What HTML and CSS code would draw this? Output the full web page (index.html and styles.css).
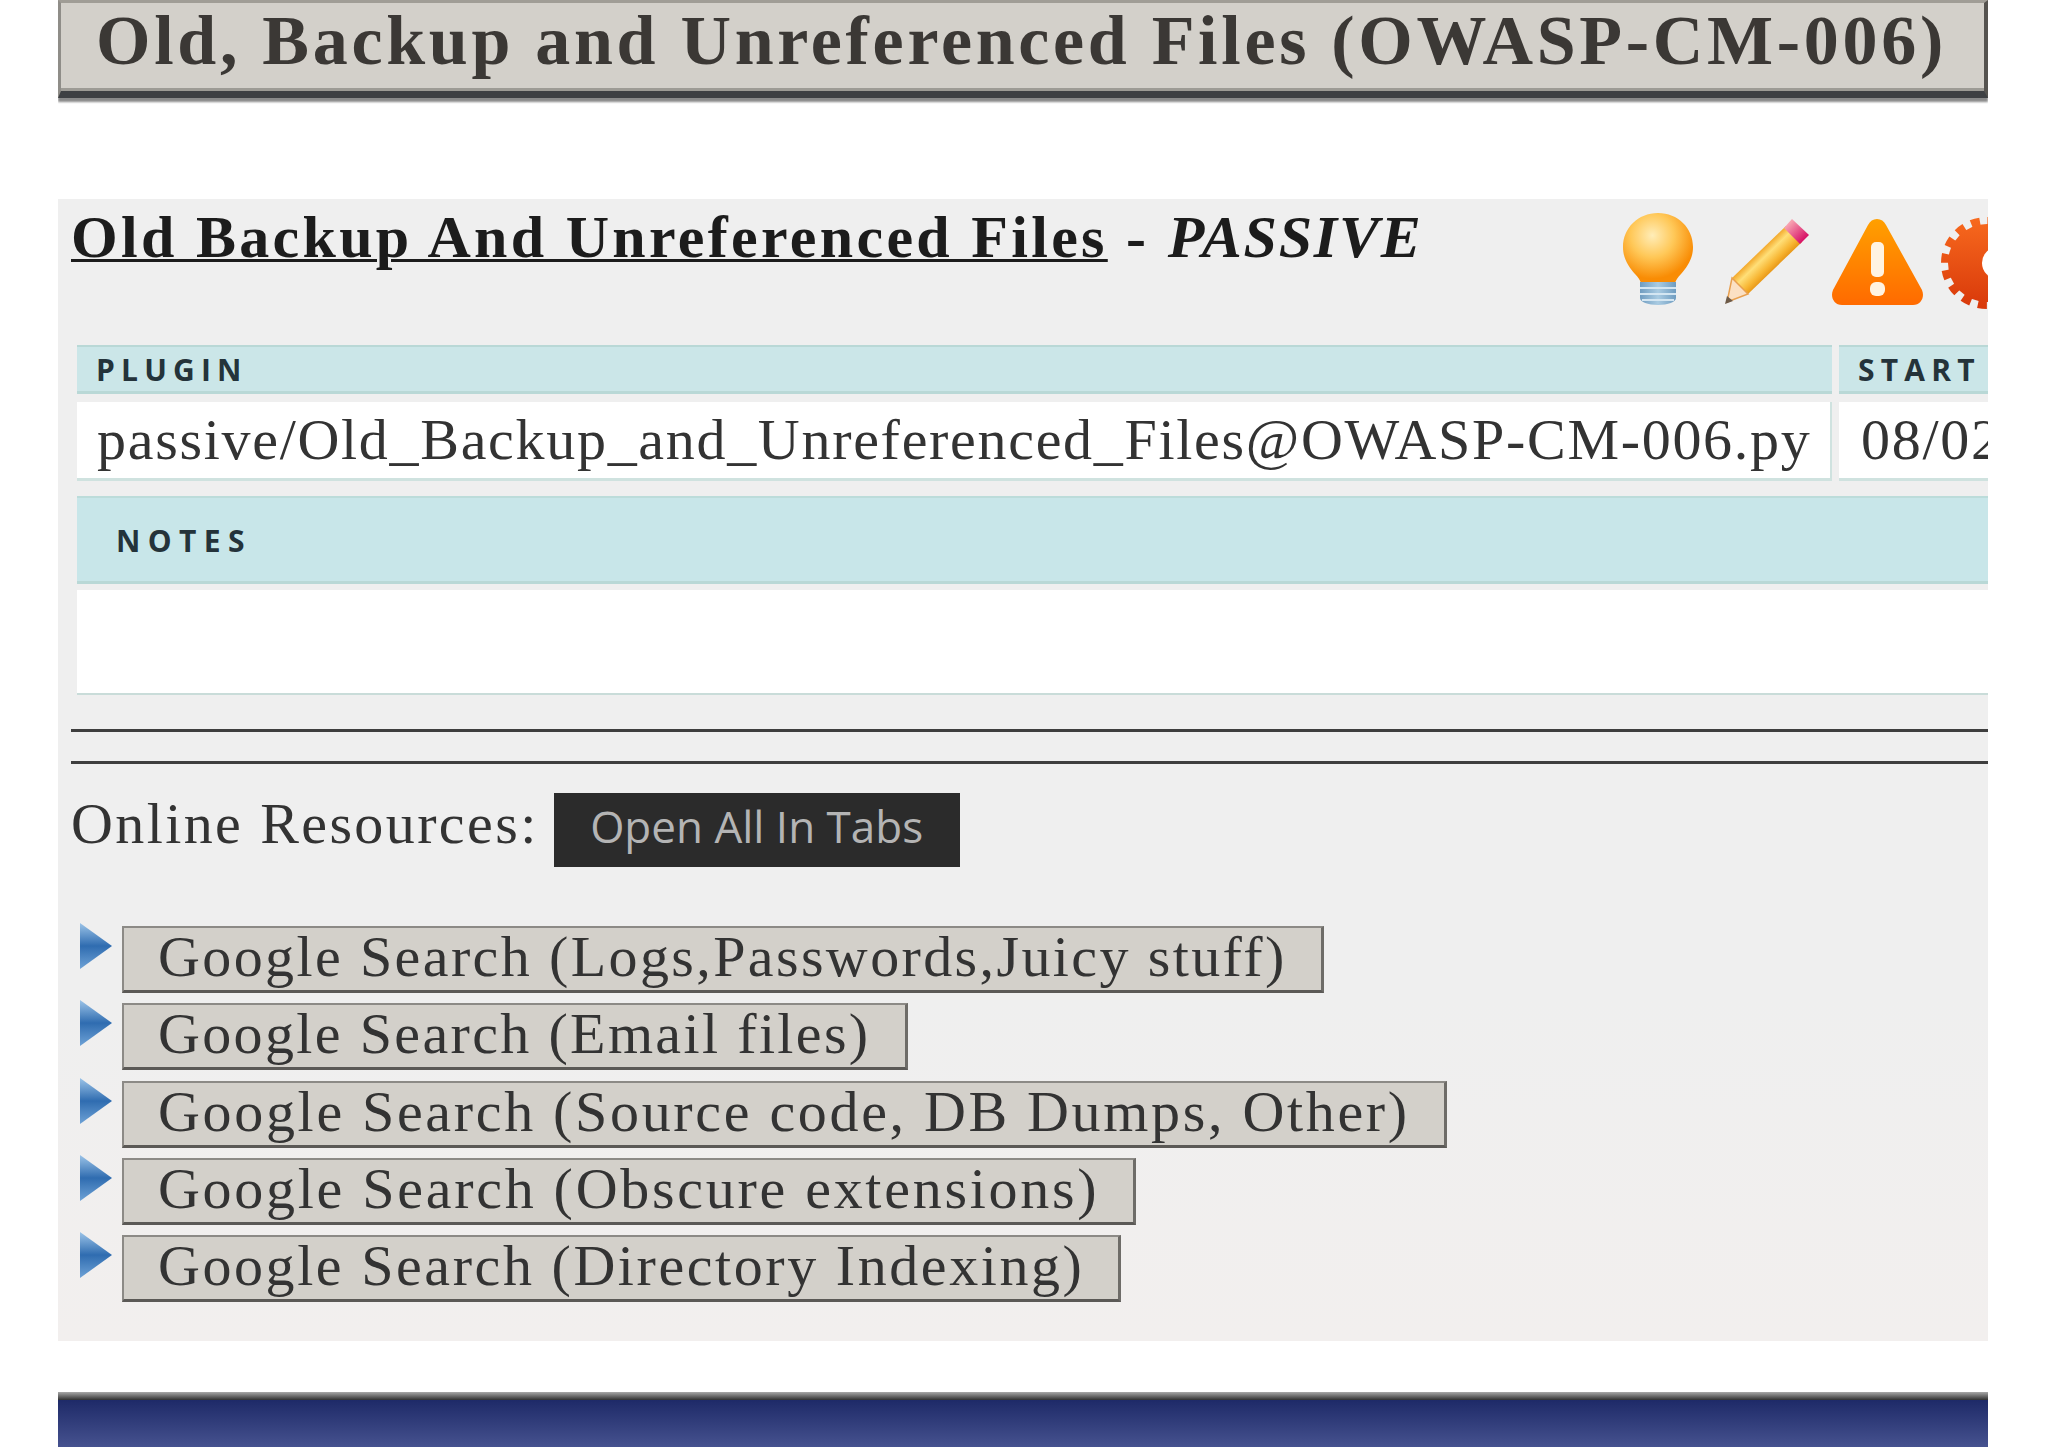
FILE: index.html
```html
<!DOCTYPE html>
<html lang="en">
<head>
    <meta charset="UTF-8">
    <title>Old, Backup and Unreferenced Files (OWASP-CM-006)</title>
    <link rel="stylesheet" href="styles.css">
</head>
<body>
    <div class="page">
        <h1 class="title">Old, Backup and Unreferenced Files (OWASP-CM-006)</h1>

        <div class="plugin">
            <div class="plugin-head">
                <h2><a href="#">Old Backup And Unreferenced Files</a> - <em>PASSIVE</em></h2>
                <div class="icons">
                    <!-- bulb -->
                    <svg class="icon-bulb" viewBox="0 0 72 94">
                        <defs>
                            <radialGradient id="glass" cx="0.42" cy="0.32" r="0.62">
                                <stop offset="0" stop-color="#ffedb8"/>
                                <stop offset="0.5" stop-color="#ffc858"/>
                                <stop offset="1" stop-color="#f98c04"/>
                            </radialGradient>
                            <linearGradient id="screw" x1="0" x2="1" y1="0" y2="0">
                                <stop offset="0" stop-color="#6f9cc0"/>
                                <stop offset="0.5" stop-color="#a9cbe2"/>
                                <stop offset="1" stop-color="#6f9cc0"/>
                            </linearGradient>
                        </defs>
                        <path d="M36 1C16 1 1 16 1 35c0 12 6 20 12 27 3 3 5 6 6 9h34c1-3 3-6 6-9 6-7 12-15 12-27C71 16 56 1 36 1z" fill="url(#glass)"/>
                        <path d="M18 70h36v16c0 4-8 7-18 7s-18-3-18-7z" fill="url(#screw)"/>
                        <path d="M18 76h36M18 82h36M20 88h32" stroke="#d4e6f2" stroke-width="2" fill="none"/>
                    </svg>
                    <!-- pencil -->
                    <svg class="icon-pencil" viewBox="0 0 86 86">
                        <defs>
                            <linearGradient id="wood" x1="0" y1="0" x2="1" y2="1">
                                <stop offset="0.34" stop-color="#ec8a00"/>
                                <stop offset="0.46" stop-color="#ffdf78"/>
                                <stop offset="0.56" stop-color="#f7b532"/>
                                <stop offset="0.66" stop-color="#dd8204"/>
                            </linearGradient>
                            <linearGradient id="rubber" x1="0" y1="0" x2="1" y2="1">
                                <stop offset="0.2" stop-color="#f7a0b0"/>
                                <stop offset="0.8" stop-color="#d81468"/>
                            </linearGradient>
                        </defs>
                        <path d="M62 8L78 24 24 76 8 60z" fill="url(#wood)"/>
                        <path d="M8 60L24 76 3 84z" fill="#fbe0c4" stroke="#e8a050" stroke-width="1.5"/>
                        <path d="M1 86l2-8 6 5z" fill="#6d5a48"/>
                        <path d="M60 10l8-9 17 16-9 9z" fill="url(#rubber)"/>
                    </svg>
                    <!-- warning -->
                    <svg class="icon-warning" viewBox="0 0 93 88">
                        <defs>
                            <linearGradient id="warn" x1="0" x2="0" y1="0" y2="1">
                                <stop offset="0" stop-color="#ffa000"/>
                                <stop offset="1" stop-color="#ff6a00"/>
                            </linearGradient>
                        </defs>
                        <path d="M46 1c4 0 7 2 9 6l36 65c3 7-1 15-9 15H11C3 87-1 79 2 72L37 7c2-4 5-6 9-6z" fill="url(#warn)"/>
                        <rect class="mark" x="40" y="24" width="13" height="35" rx="5"/>
                        <rect class="mark" x="39" y="64" width="15" height="14" rx="6"/>
                    </svg>
                    <!-- gear, cut off by the page edge -->
                    <svg class="icon-gear" viewBox="0 0 104 92">
                        <defs>
                            <linearGradient id="cog" gradientUnits="userSpaceOnUse" x1="0" x2="0" y1="0" y2="92">
                                <stop offset="0" stop-color="#f86a1e"/>
                                <stop offset="1" stop-color="#d8380a"/>
                            </linearGradient>
                        </defs>
                        <circle cx="46" cy="46" r="39" fill="url(#cog)"/>
                        <circle cx="46" cy="46" r="42" fill="none" stroke="url(#cog)" stroke-width="8" stroke-dasharray="9 7.5"/>
                        <circle cx="57" cy="46" r="16" fill="#fff"/>
                    </svg>
                </div>
            </div>

            <div class="details">
                <div class="row-grid">
                    <div class="label-cell">PLUGIN</div>
                    <div class="label-cell">START</div>
                    <div class="value-cell">passive/Old_Backup_and_Unreferenced_Files@OWASP-CM-006.py</div>
                    <div class="value-cell">08/02/2013</div>
                </div>
                <div class="notes-label">NOTES</div>
                <div class="notes-body"></div>
            </div>

            <hr class="rule">
            <hr class="rule rule-second">

            <div class="resources-line">
                <span class="resources-label">Online Resources:</span>
                <a class="open-all" href="#">Open All In Tabs</a>
            </div>

            <ul class="links">
                <li><svg class="arrow" viewBox="0 0 32 46"><use href="#tri"/></svg><a class="link-btn" href="#">Google Search (Logs,Passwords,Juicy stuff)</a></li>
                <li><svg class="arrow" viewBox="0 0 32 46"><use href="#tri"/></svg><a class="link-btn" href="#">Google Search (Email files)</a></li>
                <li><svg class="arrow" viewBox="0 0 32 46"><use href="#tri"/></svg><a class="link-btn" href="#">Google Search (Source code, DB Dumps, Other)</a></li>
                <li><svg class="arrow" viewBox="0 0 32 46"><use href="#tri"/></svg><a class="link-btn" href="#">Google Search (Obscure extensions)</a></li>
                <li><svg class="arrow" viewBox="0 0 32 46"><use href="#tri"/></svg><a class="link-btn" href="#">Google Search (Directory Indexing)</a></li>
            </ul>
        </div>

        <div class="footer-bar"></div>
    </div>

    <svg class="defs-only" width="0" height="0">
        <defs>
            <linearGradient id="triFill" x1="0" x2="0" y1="0" y2="1">
                <stop offset="0" stop-color="#9cc4e8"/>
                <stop offset="0.5" stop-color="#2f6cb0"/>
                <stop offset="1" stop-color="#6ea2d6"/>
            </linearGradient>
            <path id="tri" d="M0 0L32 23 0 46z" fill="url(#triFill)"/>
        </defs>
    </svg>
</body>
</html>
```

FILE: styles.css
```css
html, body {
    margin: 0;
    padding: 0;
    height: 1448px;
    overflow: hidden;
    background-color: #fff;
}
body {
    font-family: "Liberation Serif", serif;
    color: #2e2e2e;
}
.page {
    width: 1930px;
    margin-left: 58px;
    overflow: hidden;
    height: 1448px;
}
.defs-only {
    position: absolute;
}

.title {
    margin: 0;
    height: 98px;
    box-sizing: border-box;
    padding: 2px 0 0 35px;
    background-color: #d3d0ca;
    border-top: 3px solid #a09d96;
    border-left: 3px solid #8f8d88;
    border-right: 4px solid #55534f;
    border-bottom: 7px solid #3e4043;
    box-shadow: inset 0 -3px 0 #9d9b95, 0 4px 2px #8a8a8a;
    font-size: 70px;
    line-height: 72px;
    letter-spacing: 3.7px;
    white-space: nowrap;
    color: #3b3835;
}

.plugin {
    margin-top: 101px;
    height: 1142px;
    box-sizing: border-box;
    padding: 0 0 0 13px;
    background: linear-gradient(#efefef, #efefef 70%, #f2efee);
}
.plugin-head {
    display: flex;
    justify-content: space-between;
    height: 146px;
}
.plugin-head h2 {
    margin: 0;
    padding-top: 6px;
    height: 140px;
    font-size: 60px;
    line-height: 64px;
    letter-spacing: 3.3px;
    white-space: nowrap;
    color: #1c1c1c;
}
.plugin-head em {
    letter-spacing: 1.8px;
}
.plugin-head a {
    color: inherit;
    text-decoration-thickness: 3px;
}
.icons {
    display: flex;
    align-items: flex-start;
    width: 366px;
    flex: none;
}
.icon-bulb {
    width: 72px;
    height: 94px;
    margin-top: 13px;
    flex: none;
}
.icon-pencil {
    width: 86px;
    height: 86px;
    margin: 19px 0 0 30px;
    flex: none;
}
.icon-warning {
    width: 93px;
    height: 88px;
    margin: 19px 0 0 21px;
    flex: none;
}
.mark {
    fill: #fff3e2;
}
.icon-gear {
    width: 104px;
    height: 92px;
    margin: 18px 0 0 17px;
    flex: none;
}

.details {
    margin-left: 6px;
}
.row-grid {
    display: grid;
    grid-template-columns: 1755px 300px;
    grid-template-rows: 49px 79px;
    column-gap: 7px;
    row-gap: 8px;
}
.label-cell {
    background-color: #cbe6e8;
    border-top: 2px solid #b9d8d6;
    border-bottom: 3px solid #b9d8d6;
    padding-left: 19px;
    font-family: "Open Sans", sans-serif;
    font-weight: 700;
    font-size: 30px;
    line-height: 46px;
    letter-spacing: 6.2px;
    color: #24333a;
}
.value-cell {
    background-color: #fff;
    border-bottom: 3px solid #cfe2df;
    border-right: 2px solid #cfe2df;
    padding-left: 20px;
    font-size: 58px;
    line-height: 76px;
    letter-spacing: 1.7px;
    white-space: nowrap;
    color: #333;
}
.value-cell:last-child {
    padding-left: 22px;
}
.notes-label {
    margin-top: 15px;
    height: 88px;
    box-sizing: border-box;
    background-color: #c8e6e9;
    border-top: 2px solid #bcdcda;
    border-bottom: 3px solid #b9d8d6;
    padding-left: 39px;
    font-family: "Open Sans", sans-serif;
    font-weight: 700;
    font-size: 30px;
    line-height: 86px;
    letter-spacing: 7.4px;
    color: #24333a;
}
.notes-body {
    margin-top: 6px;
    height: 103px;
    background-color: #fff;
    border-bottom: 2px solid #c9dcd9;
}

.rule {
    margin: 34px 0 0;
    height: 3px;
    border: 0;
    background-color: #3e3e3e;
}
.rule-second {
    margin-top: 29px;
}

.resources-line {
    display: flex;
    align-items: flex-start;
    margin-top: 29px;
    height: 75px;
}
.resources-label {
    font-size: 58px;
    line-height: 62px;
    letter-spacing: 2.4px;
    white-space: nowrap;
    color: #333;
}
.open-all {
    margin-left: 15px;
    width: 406px;
    height: 74px;
    line-height: 67px;
    text-align: center;
    background-color: #2b2b2b;
    font-family: "Open Sans", sans-serif;
    font-size: 44px;
    color: #b4b4b4;
    text-decoration: none;
    white-space: nowrap;
}

.links {
    list-style: none;
    margin: 58px 0 0;
    padding: 0;
    display: flex;
    flex-direction: column;
    gap: 10.3px;
}
.links li {
    display: flex;
    align-items: flex-start;
    height: 67px;
}
.arrow {
    width: 32px;
    height: 46px;
    margin: -3px 10px 0 9px;
    flex: none;
}
.link-btn {
    display: block;
    height: 67px;
    box-sizing: border-box;
    padding: 0 34px;
    background-color: #d3d0ca;
    border-top: 2px solid #8c8a86;
    border-left: 2px solid #8c8a86;
    border-right: 3px solid #6e6c68;
    border-bottom: 3px solid #5b5956;
    font-size: 58px;
    line-height: 58px;
    letter-spacing: 2.35px;
    white-space: nowrap;
    color: #333;
    text-decoration: none;
}
.links li:nth-child(1) .link-btn {
    letter-spacing: 2.39px;
}
.links li:nth-child(3) .link-btn {
    letter-spacing: 2.68px;
}
.links li:nth-child(4) .link-btn {
    letter-spacing: 2.72px;
}
.links li:nth-child(5) .link-btn {
    letter-spacing: 2.57px;
}

.footer-bar {
    margin-top: 51px;
    height: 55px;
    background: linear-gradient(#a8a8a8, #303030 8px, #1e2a68 8px, #46528f);
}
```
